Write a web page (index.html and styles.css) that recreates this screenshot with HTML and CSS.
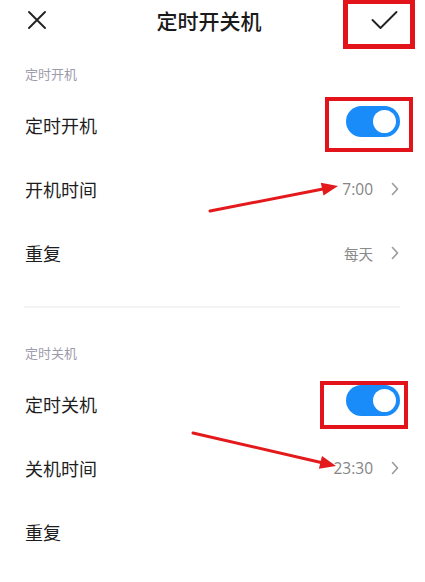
FILE: index.html
```html
<!DOCTYPE html>
<html lang="zh-CN">
<head>
<meta charset="utf-8">
<title>定时开关机</title>
<link rel="stylesheet" href="styles.css">
</head>
<body>
<div class="page">
  <header class="topbar">
    <button class="icon-btn" aria-label="关闭">
      <svg width="20" height="20" viewBox="0 0 20 20"><path d="M2 2 L18 18 M18 2 L2 18" stroke="#222" stroke-width="1.9" stroke-linecap="round" fill="none"/></svg>
    </button>
    <h1 class="title">定时开关机</h1>
    <button class="icon-btn" aria-label="确定">
      <svg width="27" height="20" viewBox="0 0 27 20"><path d="M1.5 10 L9.5 18 L25.5 2" stroke="#222" stroke-width="1.9" stroke-linecap="round" stroke-linejoin="round" fill="none"/></svg>
    </button>
  </header>

  <section class="group">
    <div class="group-label">定时开机</div>
    <div class="row">
      <span class="row-title">定时开机</span>
      <span class="switch on"><span class="knob"></span></span>
    </div>
    <div class="row">
      <span class="row-title">开机时间</span>
      <span class="row-value"><span class="num">7:00</span><svg class="chev" width="8" height="14" viewBox="0 0 8 14"><polyline points="1.5,1.5 6.5,7 1.5,12.5" fill="none" stroke="#9a9a9a" stroke-width="1.6" stroke-linecap="round" stroke-linejoin="round"/></svg></span>
    </div>
    <div class="row">
      <span class="row-title">重复</span>
      <span class="row-value">每天<svg class="chev" width="8" height="14" viewBox="0 0 8 14"><polyline points="1.5,1.5 6.5,7 1.5,12.5" fill="none" stroke="#9a9a9a" stroke-width="1.6" stroke-linecap="round" stroke-linejoin="round"/></svg></span>
    </div>
  </section>

  <div class="divider"></div>

  <section class="group group-second">
    <div class="group-label">定时关机</div>
    <div class="row">
      <span class="row-title">定时关机</span>
      <span class="switch on"><span class="knob"></span></span>
    </div>
    <div class="row">
      <span class="row-title">关机时间</span>
      <span class="row-value"><span class="num">23:30</span><svg class="chev" width="8" height="14" viewBox="0 0 8 14"><polyline points="1.5,1.5 6.5,7 1.5,12.5" fill="none" stroke="#9a9a9a" stroke-width="1.6" stroke-linecap="round" stroke-linejoin="round"/></svg></span>
    </div>
    <div class="row">
      <span class="row-title">重复</span>
    </div>
  </section>

  <!-- red highlight marks drawn on top of the screen -->
  <div class="mark mark-confirm"></div>
  <div class="mark mark-switch-on"></div>
  <div class="mark mark-switch-off"></div>
  <svg class="arrows" width="425" height="582" viewBox="0 0 425 582">
    <line x1="210" y1="211" x2="323" y2="189" stroke="#e3191c" stroke-width="3" stroke-linecap="round"/>
    <polygon points="338,186 323.5,195.5 320.8,182.8" fill="#e3191c"/>
    <line x1="193" y1="433" x2="321" y2="462.5" stroke="#e3191c" stroke-width="3" stroke-linecap="round"/>
    <polygon points="336,466 318.9,468.8 322,456" fill="#e3191c"/>
  </svg>
</div>
</body>
</html>
```

FILE: styles.css
```css
* {
  box-sizing: border-box;
}

html, body {
  margin: 0;
  padding: 0;
  background: #fff;
}

body {
  font-family: "Noto Sans CJK SC", "Noto Sans", sans-serif;
  color: #1e1e1e;
}

.page {
  position: relative;
  width: 425px;
  height: 582px;
  overflow: hidden;
}

.topbar {
  height: 40px;
  display: flex;
  align-items: center;
  justify-content: space-between;
  padding: 0 27px 0 27px;
}

.icon-btn {
  border: 0;
  background: none;
  padding: 0;
  display: flex;
  align-items: center;
}

.title {
  margin: 0;
  font-size: 21px;
  font-weight: 500;
  line-height: 40px;
  color: #1a1a1a;
}

.group {
  padding: 0 25px;
}

.group-label {
  margin-top: 25px;
  margin-bottom: 10px;
  font-size: 13px;
  line-height: 18px;
  color: #9c9cab;
}

.group-second .group-label {
  margin-top: 36px;
}

.row {
  height: 64px;
  display: flex;
  align-items: center;
  justify-content: space-between;
}

.row-title {
  font-size: 18px;
  line-height: 24px;
  color: #1e1e1e;
}

.row-value {
  display: flex;
  align-items: center;
  gap: 18px;
  font-size: 14.5px;
  color: #8a8a8a;
  padding-right: 1px;
}

.row-value .num {
  font-family: "Open Sans", "Noto Sans", sans-serif;
  font-size: 15.5px;
  color: #858585;
}

.chev {
  display: block;
}

.switch {
  position: relative;
  width: 54px;
  height: 31px;
  border-radius: 16px;
  background: #dcdcdc;
  margin-top: -7px;
}

.switch.on {
  background: #1a8cfa;
}

.switch .knob {
  position: absolute;
  top: 4px;
  left: 4px;
  width: 23px;
  height: 23px;
  border-radius: 50%;
  background: #fff;
}

.switch.on .knob {
  left: 27px;
}

.divider {
  margin: 21px 25px 0 24px;
  height: 2px;
  background: #f3f3f3;
}

.mark {
  position: absolute;
  border: 4px solid #e3131b;
  pointer-events: none;
}

.mark-confirm {
  left: 343px;
  top: -1px;
  width: 72px;
  height: 50px;
  border-width: 5px;
}

.mark-switch-on {
  left: 325px;
  top: 97px;
  width: 88px;
  height: 55px;
}

.mark-switch-off {
  left: 320px;
  top: 381px;
  width: 88px;
  height: 48px;
}

.arrows {
  position: absolute;
  left: 0;
  top: 0;
  pointer-events: none;
}
```
